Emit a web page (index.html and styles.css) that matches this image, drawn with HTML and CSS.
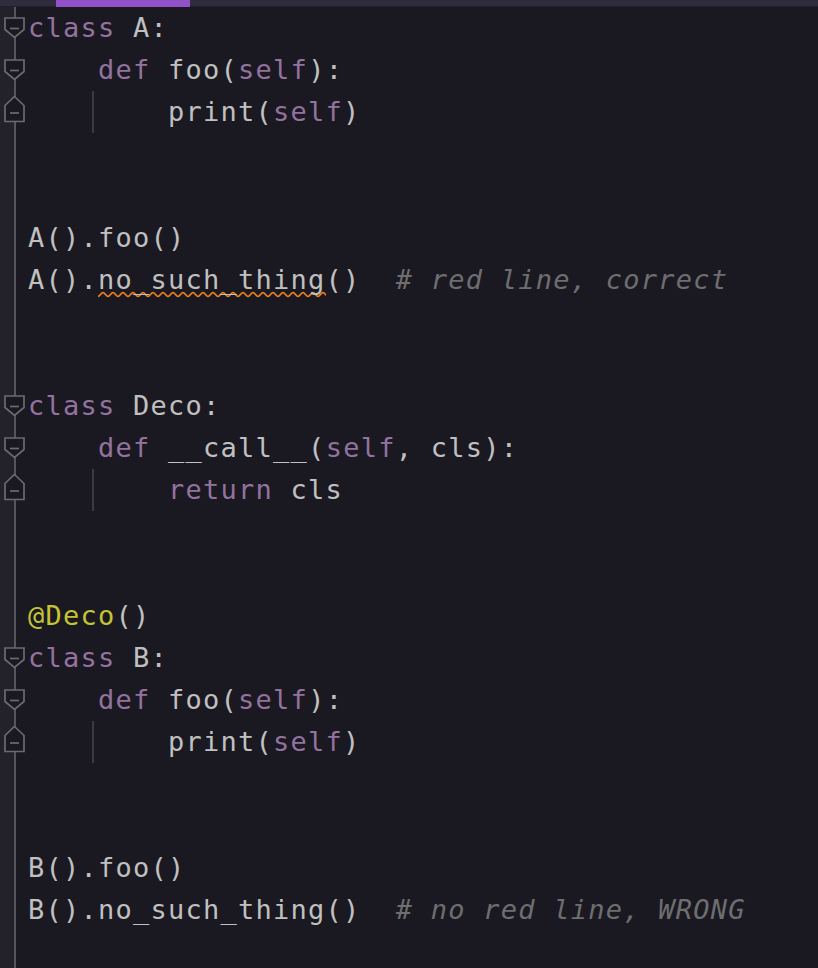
FILE: index.html
```html
<!DOCTYPE html>
<html>
<head>
<meta charset="utf-8">
<link rel="stylesheet" href="styles.css">
</head>
<body>
<div class="tabbar"><div class="tab-indicator"></div></div>
<div class="editor">
  <div class="row"><div class="fold"><svg width="28" height="42"><path class="mk" d="M5 11H24V22.5L14.5 30.5L5 22.5Z"/><path class="mk" d="M10 21.5H19"/></svg></div><div class="code"><span class="kw">class</span> A:</div></div>
  <div class="row"><div class="fold"><svg width="28" height="42"><path class="mk" d="M5 11H24V22.5L14.5 30.5L5 22.5Z"/><path class="mk" d="M10 21.5H19"/></svg></div><div class="code">    <span class="kw">def</span> foo(<span class="kw">self</span>):</div></div>
  <div class="row guide"><div class="fold"><svg width="28" height="42"><path class="mk" d="M14.5 5.5L24 14.5V30.5H5V14.5Z"/><path class="mk" d="M10 22H19"/></svg></div><div class="code">        print(<span class="kw">self</span>)</div></div>
  <div class="row"><div class="fold"></div><div class="code"> </div></div>
  <div class="row"><div class="fold"></div><div class="code"> </div></div>
  <div class="row"><div class="fold"></div><div class="code">A().foo()</div></div>
  <div class="row"><div class="fold"></div><div class="code">A().<span class="err">no_such_thing</span>()  <span class="cm"># red line, correct</span></div></div>
  <div class="row"><div class="fold"></div><div class="code"> </div></div>
  <div class="row"><div class="fold"></div><div class="code"> </div></div>
  <div class="row"><div class="fold"><svg width="28" height="42"><path class="mk" d="M5 11H24V22.5L14.5 30.5L5 22.5Z"/><path class="mk" d="M10 21.5H19"/></svg></div><div class="code"><span class="kw">class</span> Deco:</div></div>
  <div class="row"><div class="fold"><svg width="28" height="42"><path class="mk" d="M5 11H24V22.5L14.5 30.5L5 22.5Z"/><path class="mk" d="M10 21.5H19"/></svg></div><div class="code">    <span class="kw">def</span> __call__(<span class="kw">self</span>, cls):</div></div>
  <div class="row guide"><div class="fold"><svg width="28" height="42"><path class="mk" d="M14.5 5.5L24 14.5V30.5H5V14.5Z"/><path class="mk" d="M10 22H19"/></svg></div><div class="code">        <span class="kw">return</span> cls</div></div>
  <div class="row"><div class="fold"></div><div class="code"> </div></div>
  <div class="row"><div class="fold"></div><div class="code"> </div></div>
  <div class="row"><div class="fold"></div><div class="code"><span class="deco">@Deco</span>()</div></div>
  <div class="row"><div class="fold"><svg width="28" height="42"><path class="mk" d="M5 11H24V22.5L14.5 30.5L5 22.5Z"/><path class="mk" d="M10 21.5H19"/></svg></div><div class="code"><span class="kw">class</span> B:</div></div>
  <div class="row"><div class="fold"><svg width="28" height="42"><path class="mk" d="M5 11H24V22.5L14.5 30.5L5 22.5Z"/><path class="mk" d="M10 21.5H19"/></svg></div><div class="code">    <span class="kw">def</span> foo(<span class="kw">self</span>):</div></div>
  <div class="row guide"><div class="fold"><svg width="28" height="42"><path class="mk" d="M14.5 5.5L24 14.5V30.5H5V14.5Z"/><path class="mk" d="M10 22H19"/></svg></div><div class="code">        print(<span class="kw">self</span>)</div></div>
  <div class="row"><div class="fold"></div><div class="code"> </div></div>
  <div class="row"><div class="fold"></div><div class="code"> </div></div>
  <div class="row"><div class="fold"></div><div class="code">B().foo()</div></div>
  <div class="row"><div class="fold"></div><div class="code">B().no_such_thing()  <span class="cm"># no red line, WRONG</span></div></div>
  <div class="row"><div class="fold"></div><div class="code"> </div></div>
</div>
</body>
</html>
```

FILE: styles.css
```css
html, body {
  margin: 0;
  padding: 0;
  background: #1a1921;
  height: 100%;
  overflow: hidden;
}

.tabbar {
  height: 6px;
  background: #2f2d3d;
  border-bottom: 1px solid #221f29;
}

.tab-indicator {
  margin-left: 56px;
  width: 134px;
  height: 7px;
  background: #9152c9;
}

.editor {
  min-height: 961px;
  background: linear-gradient(to right, #23222b 0, #23222b 14px, #55555b 14px, #55555b 16px, transparent 16px);
  font-family: "DejaVu Sans Mono", monospace;
  font-size: 27px;
  letter-spacing: 1.25px;
  color: #c0c0c0;
}

.row {
  display: flex;
  height: 42px;
  line-height: 42px;
}

.row.guide {
  background: linear-gradient(to right, transparent 92px, #3a3a41 92px, #3a3a41 94px, transparent 94px);
}

.fold {
  width: 28px;
  flex: none;
}

.fold svg {
  display: block;
}

.mk {
  fill: #1a1921;
  stroke: #6b6b6e;
  stroke-width: 1.7;
}

.code {
  white-space: pre;
  padding-left: 0;
}

.kw {
  color: #93729f;
}

.deco {
  color: #c4c436;
}

.cm {
  color: #6e6e70;
  font-style: italic;
}

.err {
  padding-bottom: 3px;
  background-image: url("data:image/svg+xml,%3Csvg xmlns='http://www.w3.org/2000/svg' width='10' height='7'%3E%3Cpath d='M0 5.5C1.6 5.5 3.4 1.5 5 1.5C6.6 1.5 8.4 5.5 10 5.5' fill='none' stroke='%23f08118' stroke-width='1.7'/%3E%3C/svg%3E");
  background-repeat: repeat-x;
  background-position: left bottom;
  background-size: 10px 7px;
}
```
